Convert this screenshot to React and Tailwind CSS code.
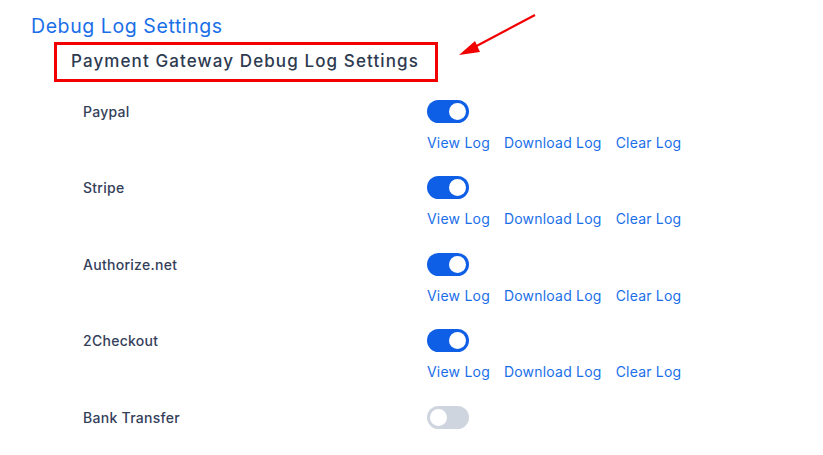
import { useState } from "react";

const gateways = [
    { name: "Paypal", on: true },
    { name: "Stripe", on: true },
    { name: "Authorize.net", on: true },
    { name: "2Checkout", on: true },
    { name: "Bank Transfer", on: false },
];

function Toggle({ on, onClick }) {
    return (
        <button
            onClick={onClick}
            className={`relative w-[42px] h-[23px] rounded-full ${on ? "bg-[#0f5fe6]" : "bg-[#cfd5df]"}`}
        >
            <span
                className={`absolute top-[3px] w-[17px] h-[17px] rounded-full bg-white ${on ? "left-[22px]" : "left-[3px]"}`}
            />
        </button>
    );
}

export default function App() {
    const [items, setItems] = useState(gateways);

    const flip = (i) => {
        setItems(items.map((g, j) => (j === i ? { ...g, on: !g.on } : g)));
    };

    return (
        <div className="relative w-[823px] h-[455px] bg-white font-['Inter',sans-serif] overflow-hidden">
            <div className="pl-[31px] pt-[12px]">
                <h1 className="text-[19.5px] leading-[28px] tracking-[0.03em] text-[#1a6fe8]">Debug Log Settings</h1>
                <div className="ml-[23px] mt-[2px] w-[384px] h-[40px] border-[3px] border-[#f20000] flex items-center pl-[14px]">
                    <h2 className="text-[17px] font-medium tracking-[0.065em] text-[#2e3a50]">Payment Gateway Debug Log Settings</h2>
                </div>
                <div className="ml-[52px] mt-[18px] flex flex-col">
                    {items.map((g, i) => (
                        <div key={g.name} className="flex h-[76.4px]">
                            <div className="w-[344px] text-[14px] font-medium tracking-[0.02em] text-[#34405a] leading-[22px] pt-[1px]">
                                {g.name}
                            </div>
                            <div className="flex flex-col">
                                <Toggle on={g.on} onClick={() => flip(i)} />
                                {g.on && (
                                    <div className="flex gap-[14px] mt-[10px] text-[14px] tracking-[0.015em] text-[#1a6fe8] leading-[20px]">
                                        <a href="#">View Log</a>
                                        <a href="#">Download Log</a>
                                        <a href="#">Clear Log</a>
                                    </div>
                                )}
                            </div>
                        </div>
                    ))}
                </div>
            </div>
            <svg className="absolute left-[455px] top-[12px]" width="85" height="48" viewBox="0 0 85 48">
                <line x1="80" y1="3" x2="14" y2="38" stroke="#f20000" strokeWidth="2.2" />
                <polygon points="4,43 20,29 25,40" fill="#f20000" />
            </svg>
        </div>
    );
}
